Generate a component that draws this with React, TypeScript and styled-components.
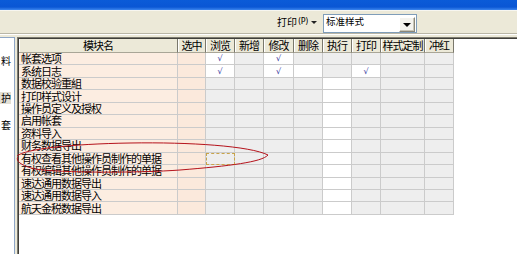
import React from 'react';
import styled, { createGlobalStyle } from 'styled-components';

const GlobalStyle = createGlobalStyle`
  html, body {
    margin: 0;
    padding: 0;
    background: #ece9d8;
  }
  body {
    font-family: "Noto Sans CJK SC", "DejaVu Sans", sans-serif;
  }
`;

const Window = styled.div`
  position: relative;
  width: 517px;
  height: 254px;
  overflow: hidden;
  display: flex;
  flex-direction: column;
  background: #ece9d8;
`;

const TitleBar = styled.div`
  height: 10px;
  flex: none;
  background: linear-gradient(#0b5bd8, #0a56d4 70%, #3d86ee);
`;

const Toolbar = styled.div`
  height: 22px;
  flex: none;
  display: flex;
  align-items: center;
  padding-left: 277px;
  border-top: 1px solid #f7f6f0;
  border-bottom: 1px solid #b9b6a6;
  box-shadow: 0 1px 0 #ffffff;
  font-size: 10px;
  color: #000;
`;

const MenuLabel = styled.div`
  display: flex;
  align-items: center;
  gap: 1px;
  width: 46px;
  line-height: 12px;
  white-space: nowrap;
`;

const Accel = styled.span`
  font-family: "DejaVu Sans", sans-serif;
  font-size: 8px;
  letter-spacing: -0.3px;
`;

const SmallArrow = styled.span`
  width: 0;
  height: 0;
  margin-left: 2px;
  border-left: 3px solid transparent;
  border-right: 3px solid transparent;
  border-top: 3px solid #222;
`;

const Combo = styled.div`
  width: 92px;
  height: 17px;
  margin-top: 3px;
  display: flex;
  justify-content: space-between;
  background: #fff;
  border: 1px solid #7f9db9;
`;

const ComboText = styled.span`
  padding: 0 0 0 2px;
  font-size: 9.5px;
  line-height: 12px;
`;

const ComboButton = styled.div`
  width: 14px;
  height: 13px;
  margin: 2px 1px 0 0;
  display: flex;
  align-items: center;
  justify-content: center;
  background: #f4f3ee;
  border: 1px solid;
  border-color: #fff #8a877a #8a877a #fff;
  box-shadow: inset -1px -1px 0 #c9c6b8;
`;

const DownArrow = styled.span`
  width: 0;
  height: 0;
  border-left: 4px solid transparent;
  border-right: 4px solid transparent;
  border-top: 4px solid #000;
`;

const Body = styled.div`
  flex: 1;
  display: flex;
  gap: 2px;
  padding-top: 3px;
  min-height: 0;
`;

const SidePanel = styled.div`
  width: 14px;
  flex: none;
  background: #fff;
  border-right: 1px solid #8ea6c6;
  border-top: 1px solid #8ea6c6;
  overflow: hidden;
`;

const SideItem = styled.div<{ $top: number; $active?: boolean }>`
  margin-top: ${p => p.$top}px;
  width: 11px;
  height: 12px;
  display: flex;
  justify-content: flex-end;
  font-size: 10px;
  line-height: 12px;
  background: ${p => (p.$active ? '#e2dfd4' : 'transparent')};
`;

const GridFrame = styled.div`
  flex: 1;
  background: #fff;
  border-top: 1px solid #7d7b70;
  border-left: 1px solid #7d7b70;
  box-shadow: inset 1px 1px 0 #403f3a;
`;

const COLS = '159px 28px 29px 29px 30px 29px 29px 29px 44px 29px';

const HeaderRow = styled.div`
  display: grid;
  grid-template-columns: ${COLS};
  height: 14px;
  margin-left: 1px;
  margin-top: 1px;
`;

const HeaderCell = styled.div`
  display: flex;
  align-items: center;
  justify-content: center;
  background: #ece9d8;
  border-right: 1px solid #7a786c;
  border-bottom: 1px solid #a9a697;
  box-shadow: inset 1px 0 0 #fff;
  font-size: 11px;
  letter-spacing: -1px;
  line-height: 13px;
  color: #000;
`;

const Row = styled.div`
  display: grid;
  grid-template-columns: ${COLS};
  height: 12.46px;
  margin-left: 1px;
`;

type Tone = 'name' | 'pick' | 'off' | 'on';

const toneBg: Record<Tone, string> = {
  name: '#fcede1',
  pick: '#fbe9dc',
  off: '#eeeeee',
  on: '#ffffff',
};

const Cell = styled.div<{ $tone: Tone; $focus?: boolean }>`
  display: flex;
  align-items: center;
  justify-content: ${p => (p.$tone === 'name' ? 'flex-start' : 'center')};
  padding-left: ${p => (p.$tone === 'name' ? '2px' : '0')};
  background: ${p => toneBg[p.$tone]};
  border-right: 1px solid #cbcbcb;
  border-bottom: 1px solid #cbcbcb;
  outline: ${p => (p.$focus ? '1px dashed #c9a44a' : 'none')};
  outline-offset: -1px;
  font-size: 11px;
  letter-spacing: -1px;
  line-height: 11px;
  white-space: nowrap;
  color: #000;
`;

const Tick = styled.span`
  font-family: "DejaVu Sans", sans-serif;
  font-size: 8px;
  letter-spacing: 0;
  color: #2b2f9a;
`;

const Overlay = styled.svg`
  position: absolute;
  left: 0;
  top: 0;
  pointer-events: none;
`;

const headers = ['模块名', '选中', '浏览', '新增', '修改', '删除', '执行', '打印', '样式定制', '冲红'];

// 权限列: 浏览 新增 修改 删除 执行 打印 样式定制 冲红
// 0 = 不可用(灰), 1 = 可用, 2 = 可用且已勾选
const rows: { name: string; perms: number[] }[] = [
  { name: '帐套选项', perms: [2, 0, 2, 0, 0, 0, 0, 0] },
  { name: '系统日志', perms: [2, 0, 2, 1, 0, 2, 0, 0] },
  { name: '数据校验重組', perms: [0, 0, 0, 0, 1, 0, 0, 0] },
  { name: '打印样式设计', perms: [0, 0, 0, 0, 1, 0, 0, 0] },
  { name: '操作员定义及授权', perms: [0, 0, 0, 0, 1, 0, 0, 0] },
  { name: '启用帐套', perms: [0, 0, 0, 0, 1, 0, 0, 0] },
  { name: '资料导入', perms: [0, 0, 0, 0, 1, 0, 0, 0] },
  { name: '财务数据导出', perms: [0, 0, 0, 0, 1, 0, 0, 0] },
  { name: '有权查看其他操作员制作的单据', perms: [0, 0, 0, 0, 1, 0, 0, 0] },
  { name: '有权编辑其他操作员制作的单据', perms: [0, 0, 0, 0, 1, 0, 0, 0] },
  { name: '速达通用数据导出', perms: [0, 0, 0, 0, 1, 0, 0, 0] },
  { name: '速达通用数据导入', perms: [0, 0, 0, 0, 1, 0, 0, 0] },
  { name: '航天金税数据导出', perms: [0, 0, 0, 0, 1, 0, 0, 0] },
];

const FOCUS_ROW = 8;

const App: React.FC = () => {
  return (
    <Window>
      <GlobalStyle />
      <TitleBar />
      <Toolbar>
        <MenuLabel>
          打印<Accel>(P)</Accel>
          <SmallArrow />
        </MenuLabel>
        <Combo>
          <ComboText>标准样式</ComboText>
          <ComboButton>
            <DownArrow />
          </ComboButton>
        </Combo>
      </Toolbar>
      <Body>
        <SidePanel>
          <SideItem $top={17}>料</SideItem>
          <SideItem $top={25} $active>护</SideItem>
          <SideItem $top={15}>套</SideItem>
        </SidePanel>
        <GridFrame>
          <HeaderRow>
            {headers.map(h => (
              <HeaderCell key={h}>{h}</HeaderCell>
            ))}
          </HeaderRow>
          {rows.map((r, i) => (
            <Row key={r.name}>
              <Cell $tone="name">{r.name}</Cell>
              <Cell $tone="pick" />
              {r.perms.map((p, j) => (
                <Cell key={j} $tone={p > 0 ? 'on' : 'off'} $focus={i === FOCUS_ROW && j === 0}>
                  {p === 2 && <Tick>√</Tick>}
                </Cell>
              ))}
            </Row>
          ))}
        </GridFrame>
      </Body>
      <Overlay width="517" height="254" viewBox="0 0 517 254">
        <path
          d="M 17 156 C 25 149, 70 144, 130 143 C 190 142, 250 146, 268 155 C 262 162, 230 166, 180 170 C 140 173, 60 173, 35 169 C 22 166, 15 161, 18 157"
          fill="none"
          stroke="#b5121b"
          strokeWidth="1"
        />
      </Overlay>
    </Window>
  );
};

export default App;
